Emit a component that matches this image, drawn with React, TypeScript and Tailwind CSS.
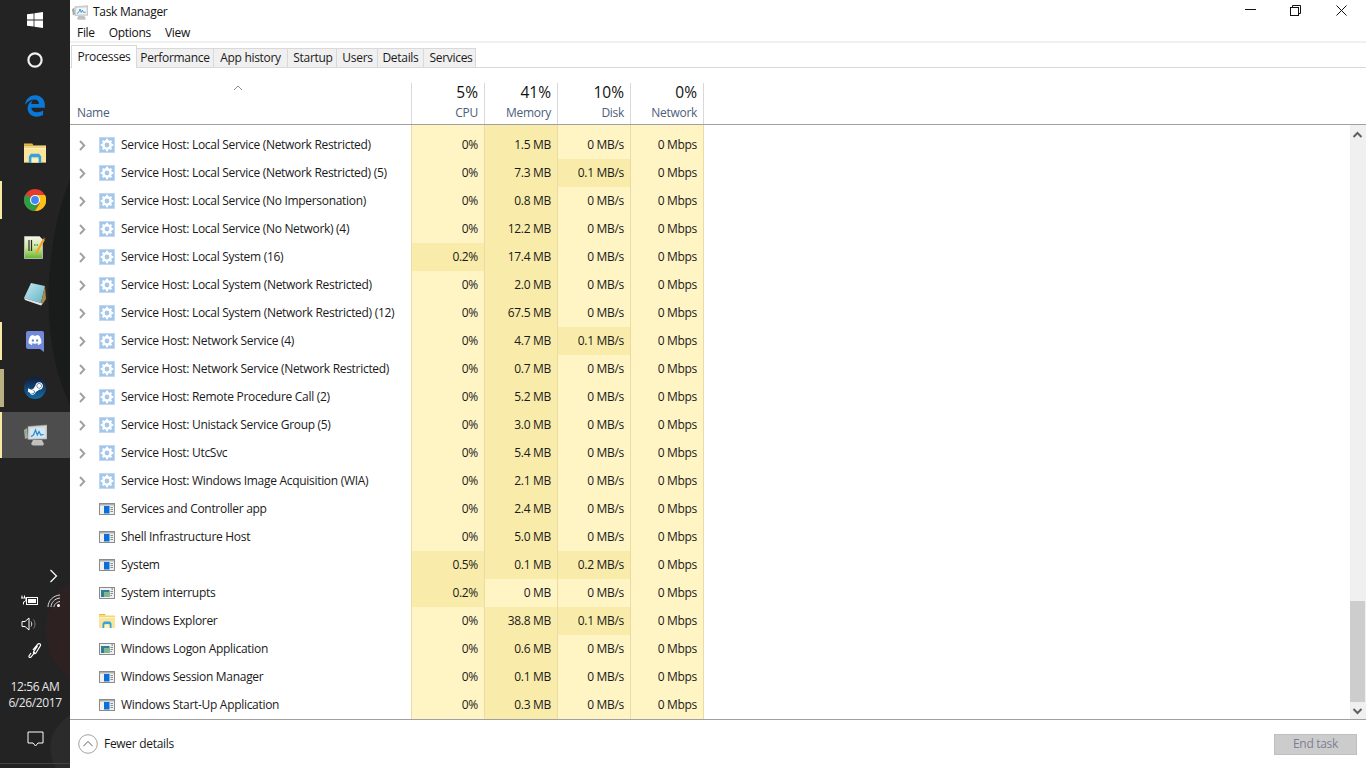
import React from "react";
import { FaDiscord, FaSteamSymbol } from "react-icons/fa";
import { FaEdgeLegacy } from "react-icons/fa6";

const rows: [string, string, string, string, string, string][] = [
  ["g", "Service Host: Local Service (Network Restricted)", "0%", "1.5 MB", "0 MB/s", "0 Mbps"],
  ["g", "Service Host: Local Service (Network Restricted) (5)", "0%", "7.3 MB", "0.1 MB/s", "0 Mbps"],
  ["g", "Service Host: Local Service (No Impersonation)", "0%", "0.8 MB", "0 MB/s", "0 Mbps"],
  ["g", "Service Host: Local Service (No Network) (4)", "0%", "12.2 MB", "0 MB/s", "0 Mbps"],
  ["g", "Service Host: Local System (16)", "0.2%", "17.4 MB", "0 MB/s", "0 Mbps"],
  ["g", "Service Host: Local System (Network Restricted)", "0%", "2.0 MB", "0 MB/s", "0 Mbps"],
  ["g", "Service Host: Local System (Network Restricted) (12)", "0%", "67.5 MB", "0 MB/s", "0 Mbps"],
  ["g", "Service Host: Network Service (4)", "0%", "4.7 MB", "0.1 MB/s", "0 Mbps"],
  ["g", "Service Host: Network Service (Network Restricted)", "0%", "0.7 MB", "0 MB/s", "0 Mbps"],
  ["g", "Service Host: Remote Procedure Call (2)", "0%", "5.2 MB", "0 MB/s", "0 Mbps"],
  ["g", "Service Host: Unistack Service Group (5)", "0%", "3.0 MB", "0 MB/s", "0 Mbps"],
  ["g", "Service Host: UtcSvc", "0%", "5.4 MB", "0 MB/s", "0 Mbps"],
  ["g", "Service Host: Windows Image Acquisition (WIA)", "0%", "2.1 MB", "0 MB/s", "0 Mbps"],
  ["w", "Services and Controller app", "0%", "2.4 MB", "0 MB/s", "0 Mbps"],
  ["w", "Shell Infrastructure Host", "0%", "5.0 MB", "0 MB/s", "0 Mbps"],
  ["w", "System", "0.5%", "0.1 MB", "0.2 MB/s", "0 Mbps"],
  ["i", "System interrupts", "0.2%", "0 MB", "0 MB/s", "0 Mbps"],
  ["f", "Windows Explorer", "0%", "38.8 MB", "0.1 MB/s", "0 Mbps"],
  ["i", "Windows Logon Application", "0%", "0.6 MB", "0 MB/s", "0 Mbps"],
  ["w", "Windows Session Manager", "0%", "0.1 MB", "0 MB/s", "0 Mbps"],
  ["w", "Windows Start-Up Application", "0%", "0.3 MB", "0 MB/s", "0 Mbps"],
];

function GearIcon() {
  return (
    <svg width="16" height="16" viewBox="0 0 16 16" className="shrink-0">
      <rect width="16" height="16" fill="#a3c7eb" />
      <rect x="0.5" y="0.5" width="15" height="15" fill="none" stroke="#c2d9f1" />
      <circle cx="8" cy="8" r="3.7" fill="none" stroke="#ffffff" strokeWidth="2.6" />
      <path d="M8 1.800V4M8 12v2.200M1.800 8H4M12 8h2.200M3.600 3.600l1.600 1.600M10.800 10.800l1.600 1.600M12.400 3.600l-1.600 1.600M5.200 10.800l-1.600 1.600" stroke="#ffffff" strokeWidth="2" />
    </svg>
  );
}
function WinIcon() {
  return (
    <svg width="16" height="12" viewBox="0 0 16 12" className="shrink-0">
      <rect x="0.500" y="0.500" width="15" height="11" fill="#f0f0f0" stroke="#8a8a8a" />
      <rect x="1" y="1" width="14" height="1.500" fill="#b0b0b0" />
      <rect x="5" y="3" width="5.500" height="7.500" fill="#0a6fd6" />
      <path d="M11.500 4.500h2.500M11.500 6.500h2.500M11.500 8.500h2.500" stroke="#8a8a8a" />
    </svg>
  );
}
function IntIcon() {
  return (
    <svg width="16" height="12" viewBox="0 0 16 12" className="shrink-0">
      <rect x="0.500" y="0.500" width="15" height="11" fill="#f0f0f0" stroke="#8a8a8a" />
      <rect x="2" y="3" width="8.500" height="7" fill="#2f7d96" />
      <rect x="5" y="5" width="5.500" height="5" fill="#7fb78e" />
      <path d="M11.500 4.500h2.500M11.500 6.500h2.500M11.500 8.500h1.500" stroke="#8a8a8a" />
      <path d="M12.500 2h1.500" stroke="#555" />
    </svg>
  );
}
function FolderIcon({ size = 16 }: { size?: number }) {
  return (
    <svg width={size} height={size} viewBox="0 0 16 16" className="shrink-0">
      <path d="M0 1h6l1 1.500H0z" fill="#e9b93c" />
      <rect y="2.500" width="16" height="1.500" fill="#f6d76d" />
      <rect y="4" width="16" height="11" fill="#fbe59a" />
      <rect y="4" width="16" height="1" fill="#fff2c0" />
      <path d="M3.500 15V10.500L5 8.500h6l1.500 2V15H10.500V11h-5v4z" fill="#2fa4e0" />
      <rect x="5.500" y="12" width="5" height="3" fill="#fff2c0" />
    </svg>
  );
}
function Chevron() {
  return (
    <svg width="7" height="11" viewBox="0 0 7 11" className="shrink-0">
      <path d="M1 1l4.300 4.500L1 10" fill="none" stroke="#a0a0a0" strokeWidth="1.900" />
    </svg>
  );
}
function RowIcon({ k }: { k: string }) {
  if (k === "g") return <GearIcon />;
  if (k === "w") return <WinIcon />;
  if (k === "i") return <IntIcon />;
  return <FolderIcon />;
}

function Cell({ v, dark }: { v: string; dark: boolean }) {
  return (
    <div className={`w-[73px] shrink-0 h-full border-r border-r-[#ecdca4] pr-[6px] flex items-center justify-end text-[#1a1a1a] ${dark ? "bg-[#f9ecaa]" : "bg-[#fff4c4]"}`}>
      {v}
    </div>
  );
}

function Head({ pct, label }: { pct: string; label: string }) {
  return (
    <div className="w-[73px] shrink-0 border-r border-r-[#d9d9d9] mt-[15px] pr-[6px] flex flex-col items-end">
      <span className="text-[15.500px] leading-[18px] tracking-normal text-[#111]">{pct}</span>
      <span className="text-[12px] leading-[16px] mt-[4px] text-[#4c607a]">{label}</span>
    </div>
  );
}

function Slot({ h, active, bar, children, className = "" }: { h: number; active?: boolean; bar?: "full" | "double"; children: React.ReactNode; className?: string }) {
  return (
    <div className={`relative w-full flex items-center justify-center shrink-0 ${active ? "bg-[#4d4d4d]" : ""} ${className}`} style={{ height: h }}>
      {bar === "full" && <div className="absolute left-0 top-0 bottom-0 w-[2px] bg-[#f6e9a4]" />}
      {bar === "double" && <div className="absolute left-0 top-0 bottom-0 w-[4px] bg-[#b9b083]" />}
      {children}
    </div>
  );
}

export default function App() {
  return (
    <div className="w-[1366px] h-[768px] overflow-hidden flex bg-white text-[12px] tracking-[-0.3px] text-[#1a1a1a]" style={{ fontFamily: '"Open Sans", sans-serif' }}>
      {/* taskbar */}
      <aside className="relative w-[70px] shrink-0 h-full bg-[#232323] text-white flex flex-col overflow-hidden">
        <svg className="absolute inset-0" width="70" height="768" viewBox="0 0 70 768">
          <path d="M70 180C45 240 38 340 70 405Z" fill="#191c1b" />
          <path d="M70 583C38 600 38 660 70 677Z" fill="#2e2122" />
          <path d="M70 715C48 730 46 750 56 768H70Z" fill="#2b2b2b" />
          <rect y="763" width="70" height="1" fill="#444444" />
        </svg>
        <div className="relative flex flex-col w-full">
          <Slot h={40}>
            <svg width="16" height="16" viewBox="0 0 16 16"><path d="M0 2.300l6.600-.9v6.200H0zM7.400 1.300L16 0v7.600H7.400zM0 8.400h6.600v6.200L0 13.700zM7.400 8.400H16V16l-8.600-1.300z" fill="#fff" /></svg>
          </Slot>
          <Slot h={40}>
            <svg width="16" height="16" viewBox="0 0 16 16"><circle cx="8" cy="8" r="6.600" fill="none" stroke="#f0f0f0" strokeWidth="2.200" /></svg>
          </Slot>
          <Slot h={52}><FaEdgeLegacy size={22} color="#0a78d7" /></Slot>
          <Slot h={42}><FolderIcon size={22} /></Slot>
          <Slot h={38} bar="full" className="mt-[7px]"><ChromeIcon /></Slot>
          <Slot h={56}><SheetIcon /></Slot>
          <Slot h={38}><NoteIcon /></Slot>
          <Slot h={38} bar="full" className="mt-[9px]"><DiscordIcon /></Slot>
          <Slot h={38} bar="double" className="mt-[9px]"><SteamIcon /></Slot>
          <Slot h={46} active bar="full" className="mt-[5px]"><MonitorIcon /></Slot>
        </div>
        <div className="relative mt-auto flex flex-col w-full items-center pb-[20px]">
          <svg width="9" height="14" viewBox="0 0 9 14" className="ml-[36px] mb-[11px]"><path d="M1.500 1l6 6-6 6" fill="none" stroke="#fff" strokeWidth="1.200" /></svg>
          <div className="flex w-full justify-between pl-[21px] pr-[9px] items-center">
            <svg width="17" height="12" viewBox="0 0 17 12"><path d="M1 .5v2.500M3.500 .5v2.500M0 3h5v2.500L3 7H2.500v2.500" fill="none" stroke="#fff" /><rect x="5.500" y="2.500" width="11" height="7" fill="none" stroke="#fff" /><rect x="7" y="4" width="8" height="4" fill="#fff" /></svg>
            <svg width="14" height="14" viewBox="0 0 14 14"><g fill="none" stroke="#d8d8d8"><path d="M1 13C1 7 6 1.500 13 1" /><path d="M4 13C4 9 7.500 4.500 13 4" /><path d="M7 13C7 10.500 9.500 8 13 7.500" /></g><circle cx="11.500" cy="11.500" r="1.500" fill="#fff" /></svg>
          </div>
          <div className="flex w-full pl-[21px] mt-[9px]">
            <svg width="17" height="14" viewBox="0 0 17 14"><path d="M1 4.500h3l4-3.500v12l-4-3.500H1z" fill="none" stroke="#fff" /><path d="M10 4.500c1 1.500 1 3.500 0 5" fill="none" stroke="#ddd" /><path d="M12.500 2.500c2 3 2 6 0 9" fill="none" stroke="#777" /></svg>
          </div>
          <svg width="18" height="18" viewBox="0 0 18 18" className="mt-[11px] mb-[19px] ml-[2px]"><path d="M6 8l5-6c1-1 3 0 2.500 1.500L9 11c-1 1.300-3 .5-2.500-1l4-6M8 10l-4 5c-1 1-2.500.3-2-1l2-3" fill="none" stroke="#fff" strokeWidth="1.200" /></svg>
          <div className="text-[12px] leading-[16px] text-center text-[#e6e6e6] whitespace-nowrap tracking-[-0.4px]">12:56 AM<br />6/26/2017</div>
          <svg width="17" height="17" viewBox="0 0 17 17" className="mt-[20px]"><path d="M1 1h15v11h-5l-2.500 3L6 12H1z" fill="none" stroke="#fff" /></svg>
        </div>
      </aside>

      {/* task manager window */}
      <main className="flex-1 min-w-0 h-full flex flex-col">
        <div className="h-[22px] shrink-0 flex items-center pl-[2px] pt-[2px]">
          <MonitorIcon small />
          <span className="ml-[5px] text-[#111]">Task Manager</span>
          <div className="ml-auto flex items-center h-full text-black">
            <svg width="11" height="2" viewBox="0 0 11 2" className="mr-[34px] -mt-[4px]"><rect width="11" height="1" fill="#111" /></svg>
            <svg width="11" height="11" viewBox="0 0 11 11" className="mr-[35px] -mt-[4px]"><rect x="0.500" y="2.500" width="8" height="8" fill="#fff" stroke="#111" /><path d="M2.500 2.500v-2h8v8h-2" fill="none" stroke="#111" /></svg>
            <svg width="11" height="11" viewBox="0 0 11 11" className="mr-[19px] -mt-[4px]"><path d="M.5.500l10 10M10.500.500l-10 10" stroke="#111" /></svg>
          </div>
        </div>
        <div className="h-[21px] shrink-0 flex items-center pl-[7px] pt-[3px] gap-[14px] text-[#111] border-b-2 border-b-[#f0f0f0]">
          <span>File</span><span>Options</span><span>View</span>
        </div>
        <div className="h-[25px] shrink-0 flex items-end pl-[1px] border-b border-b-[#d9d9d9]">
          <div className="h-[23px] w-[66px] bg-white border border-[#d9d9d9] border-b-0 flex items-center justify-center -mb-[1px] relative z-10">Processes</div>
          {([["Performance", 77, 0], ["App history", 74, 0], ["Startup", 49, 2], ["Users", 41, 1], ["Details", 46, 0], ["Services", 52, 3]] as [string, number, number][]).map(([t, w, p]) => (
            <div key={t} className="h-[19px] bg-[#f0f0f0] border border-[#d9d9d9] border-l-0 border-b-0 flex items-center justify-center" style={{ width: w, paddingLeft: p }}>{t}</div>
          ))}
        </div>
        <div className="h-[57px] shrink-0 flex border-b border-b-[#a0a0a0]">
          <div className="w-[342px] shrink-0 border-r border-r-[#d9d9d9] mt-[15px] relative">
            <svg width="10" height="6" viewBox="0 0 10 6" className="absolute left-[163px] top-[2px]"><path d="M1 5l4-4 4 4" fill="none" stroke="#8a8a8a" /></svg>
            <div className="absolute bottom-[3px] left-[7px] leading-[16px] text-[#4c607a]">Name</div>
          </div>
          <Head pct="5%" label="CPU" />
          <Head pct="41%" label="Memory" />
          <Head pct="10%" label="Disk" />
          <Head pct="0%" label="Network" />
        </div>
        <div className="flex-1 min-h-0 flex">
          <div className="flex-1 min-w-0 flex flex-col">
            <div className="h-[6px] shrink-0 flex">
              <div className="w-[342px] shrink-0 border-r border-r-[#ecdca4]" />
              <Cell v="" dark={false} /><Cell v="" dark /><Cell v="" dark={false} /><Cell v="" dark={false} />
            </div>
            {rows.map((r, i) => (
              <div key={i} className="h-[28px] shrink-0 flex">
                <div className="w-[342px] shrink-0 h-full border-r border-r-[#ecdca4] flex items-center pl-[9px] whitespace-nowrap overflow-hidden">
                  <div className="w-[7px] shrink-0 flex">{r[0] === "g" && <Chevron />}</div>
                  <div className="w-[16px] ml-[13px] shrink-0 flex items-center justify-center"><RowIcon k={r[0]} /></div>
                  <span className="ml-[6px]">{r[1]}</span>
                </div>
                <Cell v={r[2]} dark={r[2] !== "0%"} />
                <Cell v={r[3]} dark={r[1] !== "System interrupts"} />
                <Cell v={r[4]} dark={r[4] !== "0 MB/s"} />
                <Cell v={r[5]} dark={false} />
              </div>
            ))}
          </div>
          <div className="w-[16px] shrink-0 bg-[#f0f0f0] flex flex-col">
            <svg width="15" height="17" viewBox="0 0 15 17" className="shrink-0"><path d="M3.500 12l4-4 4 4" fill="none" stroke="#606060" strokeWidth="2" /></svg>
            <div className="flex-1" />
            <div className="w-[15px] h-[101px] bg-[#cdcdcd] shrink-0" />
            <svg width="15" height="17" viewBox="0 0 15 17" className="shrink-0"><path d="M3.500 7l4 4 4-4" fill="none" stroke="#606060" strokeWidth="2" /></svg>
          </div>
        </div>
        <div className="h-[49px] shrink-0 border-t border-t-[#a0a0a0] flex items-center pl-[8px] pr-[9px]">
          <svg width="20" height="20" viewBox="0 0 20 20"><circle cx="10" cy="10" r="9.300" fill="#fff" stroke="#a0a0a0" /><path d="M5.500 12l4.500-4.500 4.500 4.500" fill="none" stroke="#a0a0a0" strokeWidth="1.200" /></svg>
          <span className="ml-[6px]">Fewer details</span>
          <div className="ml-auto w-[83px] h-[21px] bg-[#cccccc] border border-[#bfbfbf] text-[#7d7f96] flex items-center justify-center">End task</div>
        </div>
      </main>
    </div>
  );
}

function ChromeIcon() {
  return (
    <svg width="22" height="22" viewBox="0 0 22 22">
      <circle cx="11" cy="11" r="11" fill="#e33b2e" />
      <path d="M11 11L1.500 5.500A11 11 0 0 0 11 22l5-11z" fill="#2c9f45" />
      <path d="M11 6h10.100A11 11 0 0 1 11 22l5-8z" fill="#fbc116" />
      <circle cx="11" cy="11" r="5" fill="#fff" />
      <circle cx="11" cy="11" r="3.900" fill="#4285f4" />
    </svg>
  );
}
function SheetIcon() {
  return (
    <svg width="22" height="24" viewBox="0 0 22 24">
      <defs>
        <linearGradient id="sheetG" x1="0" y1="0" x2="0" y2="1">
          <stop offset="0" stopColor="#f2f6ea" />
          <stop offset="0.5" stopColor="#cfe79a" />
          <stop offset="1" stopColor="#63b32e" />
        </linearGradient>
      </defs>
      <path d="M.5 1.500h15l3 3v19H.5z" fill="url(#sheetG)" stroke="#b5b5b5" />
      <path d="M5 5v11M7.500 5v11" stroke="#2a2a2a" strokeWidth="1.200" />
      <path d="M10 10h1.500M12.500 10h1.500" stroke="#2a5a2a" />
      <path d="M11 18L19 3.500l2 1.200L13 19z" fill="#f0a52a" />
      <path d="M19 3.500l.8-1.500 2 1.200-.8 1.500z" fill="#7a3f3a" />
    </svg>
  );
}
function NoteIcon() {
  return (
    <svg width="22" height="23" viewBox="0 0 22 23">
      <defs>
        <linearGradient id="noteG" x1="0" y1="0" x2="1" y2="1">
          <stop offset="0" stopColor="#c8eaf0" />
          <stop offset="1" stopColor="#5fb3c6" />
        </linearGradient>
      </defs>
      <path d="M7 0L21 3 17 20 0 15z" fill="url(#noteG)" />
      <path d="M0 15l17 5 2 .5-2 2L1 17z" fill="#e6e6e6" />
      <path d="M21 3l1 13-3 4.500L17 20z" fill="#a88a4a" />
    </svg>
  );
}
function DiscordIcon() {
  return (
    <div className="relative w-[18px] h-[21px]">
      <svg className="absolute inset-0" width="18" height="21" viewBox="0 0 18 21">
        <path d="M2 0h14a2 2 0 0 1 2 2v19l-4-3H2a2 2 0 0 1-2-2V2a2 2 0 0 1 2-2z" fill="#7289da" />
      </svg>
      <div className="absolute inset-x-0 top-0 h-[18px] flex items-center justify-center"><FaDiscord size={14} color="#fff" /></div>
    </div>
  );
}
function SteamIcon() {
  return (
    <div className="w-[22px] h-[22px] rounded-full bg-gradient-to-b from-[#0d1f3f] to-[#0f6da8] flex items-center justify-center overflow-hidden">
      <FaSteamSymbol size={17} color="#fff" />
    </div>
  );
}
function MonitorIcon({ small }: { small?: boolean }) {
  return (
    <svg width={small ? 16 : 23} height={small ? 15 : 22} viewBox="0 0 23 22" className="shrink-0">
      <path d="M0 6l3-2 1 10-3 1z" fill="#a9a9a9" />
      <rect x="0.600" y="7" width="1.600" height="2.500" fill="#5fc45f" />
      <path d="M4 2.500L23 1v14L4 15.500z" fill="#d6d6d6" stroke="#9a9a9a" strokeWidth="0.600" />
      <path d="M6 4.500L21 3.500v10L6 14z" fill={small ? "#eef6fb" : "#cfe8f4"} />
      <path d="M7 12.500l2.500-1.500 2-5 1.800 5 1.700-3.500 1.800 3.500 3-.5" fill="none" stroke="#2c86c7" strokeWidth="1.200" />
      <path d="M9 16h9l2 4-1 1.500H9L7 20z" fill="#c0c0c0" />
    </svg>
  );
}
